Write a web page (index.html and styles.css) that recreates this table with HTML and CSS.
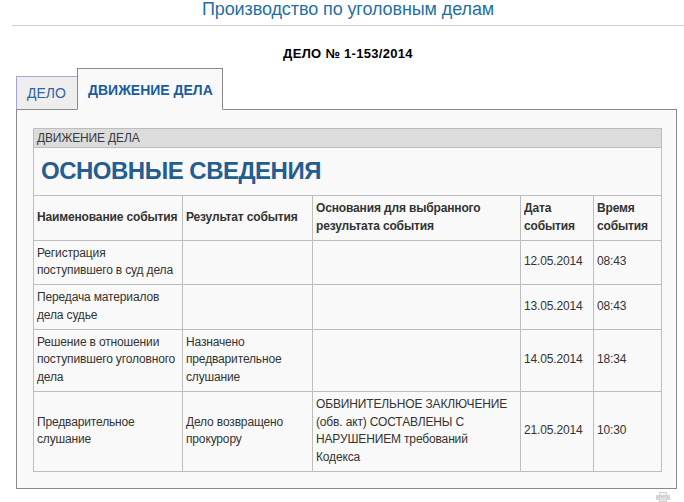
FILE: index.html
```html
<!DOCTYPE html>
<html lang="ru">
<head>
<meta charset="utf-8">
<title>Производство по уголовным делам</title>
<link rel="stylesheet" href="styles.css">
</head>
<body>
<div class="page">
  <h1 class="title">Производство по уголовным делам</h1>
  <div class="case-no">ДЕЛО № 1-153/2014</div>
  <div class="tabs-block">
    <div class="tabs">
      <div class="tab">ДЕЛО</div>
      <div class="tab tab-active">ДВИЖЕНИЕ ДЕЛА</div>
    </div>
    <div class="panel">
      <table class="events">
        <colgroup>
          <col class="c1"><col class="c2"><col class="c3"><col class="c4"><col class="c5">
        </colgroup>
        <tr class="sec-row"><td colspan="5">ДВИЖЕНИЕ ДЕЛА</td></tr>
        <tr class="big-row"><td colspan="5">ОСНОВНЫЕ СВЕДЕНИЯ</td></tr>
        <tr class="head-row">
          <th>Наименование события</th>
          <th>Результат события</th>
          <th>Основания для выбранного результата события</th>
          <th>Дата события</th>
          <th>Время события</th>
        </tr>
        <tr>
          <td>Регистрация поступившего в суд дела</td>
          <td></td>
          <td></td>
          <td>12.05.2014</td>
          <td>08:43</td>
        </tr>
        <tr>
          <td>Передача материалов дела судье</td>
          <td></td>
          <td></td>
          <td>13.05.2014</td>
          <td>08:43</td>
        </tr>
        <tr>
          <td>Решение в отношении поступившего уголовного дела</td>
          <td>Назначено предварительное слушание</td>
          <td></td>
          <td>14.05.2014</td>
          <td>18:34</td>
        </tr>
        <tr>
          <td>Предварительное слушание</td>
          <td>Дело возвращено прокурору</td>
          <td>ОБВИНИТЕЛЬНОЕ ЗАКЛЮЧЕНИЕ (обв. акт) СОСТАВЛЕНЫ С НАРУШЕНИЕМ требований Кодекса</td>
          <td>21.05.2014</td>
          <td>10:30</td>
        </tr>
      </table>
    </div>
  </div>
  <div class="print-row">
    <svg class="print-icon" width="14" height="10" viewBox="0 0 14 10" aria-hidden="true">
      <rect x="3.5" y="0.5" width="7" height="3" fill="#f4f4f4" stroke="#d2d2d2" stroke-width="1"/>
      <rect x="0" y="3" width="14" height="5" fill="#d6d6d6"/>
      <rect x="3.5" y="5.5" width="7" height="4" fill="#ececec" stroke="#d2d2d2" stroke-width="1"/>
      <line x1="5" y1="7.5" x2="9" y2="7.5" stroke="#d2d2d2"/>
    </svg>
  </div>
</div>
</body>
</html>
```

FILE: styles.css
```css
html, body {
  margin: 0;
  padding: 0;
  background: #ffffff;
}
body {
  font-family: "Liberation Sans", Arial, sans-serif;
  color: #333333;
  font-size: 12px;
}
.page {
  margin-left: 12px;
  width: 672px;
}
.title {
  margin: 0;
  padding: 0 0 6px 0;
  height: 19px;
  font-size: 18px;
  line-height: 19px;
  letter-spacing: -0.1px;
  font-weight: normal;
  text-align: center;
  color: #1f6fa7;
  border-bottom: 1px solid #cfcfcf;
}
.case-no {
  margin-top: 20px;
  text-align: center;
  font-size: 13px;
  letter-spacing: 0.3px;
  font-weight: bold;
  color: #000000;
  line-height: 15px;
}
.tabs-block {
  margin-left: 4px;
  margin-top: 7px;
  width: 661px;
}
.tabs {
  display: flex;
  align-items: flex-end;
  margin-bottom: -1px;
  position: relative;
  z-index: 1;
}
.tab {
  box-sizing: border-box;
  height: 34px;
  width: 61px;
  padding-left: 10px;
  line-height: 33px;
  font-size: 14px;
  color: #2e64a0;
  background: #eeeeee;
  border-left: 1px solid #a5a5d8;
  border-top: 1px solid #a5a5d8;
  border-bottom: 1px solid #8a8a8a;
}
.tab-active {
  height: 42px;
  width: 146px;
  padding-left: 10px;
  line-height: 42px;
  font-weight: bold;
  color: #1a5c9e;
  background: #f9f9f9;
  border: 1px solid #8a8a8a;
  border-bottom: 1px solid #f9f9f9;
}
.panel {
  box-sizing: border-box;
  border: 1px solid #8a8a8a;
  background: #f9f9f9;
  padding: 18px 16px 16px 16px;
}
.events {
  border-collapse: collapse;
  width: 628px;
  table-layout: fixed;
}
.c1 { width: 149px; }
.c2 { width: 130px; }
.c3 { width: 208px; }
.c4 { width: 73px; }
.c5 { width: 68px; }
.events td,
.events th {
  border: 1px solid #bdbdbd;
  padding: 4px 2px 4px 3px;
  line-height: 17.75px;
  vertical-align: middle;
  text-align: left;
  font-size: 12px;
  letter-spacing: -0.15px;
  color: #333333;
}
.events td:nth-child(3) {
  padding-right: 10px;
}
.events th {
  font-weight: bold;
}
.events .sec-row td {
  background: #dcdcdc;
  padding: 0 3px;
  line-height: 18px;
  color: #3a3a3a;
}
.events .big-row td {
  padding: 9px 7px 10px 7px;
  font-size: 24px;
  line-height: 28px;
  letter-spacing: -0.5px;
  font-weight: bold;
  color: #245d90;
}
.print-row {
  display: flex;
  justify-content: flex-end;
  padding: 3px 14px 0 0;
}
.print-icon {
  display: block;
}
```
